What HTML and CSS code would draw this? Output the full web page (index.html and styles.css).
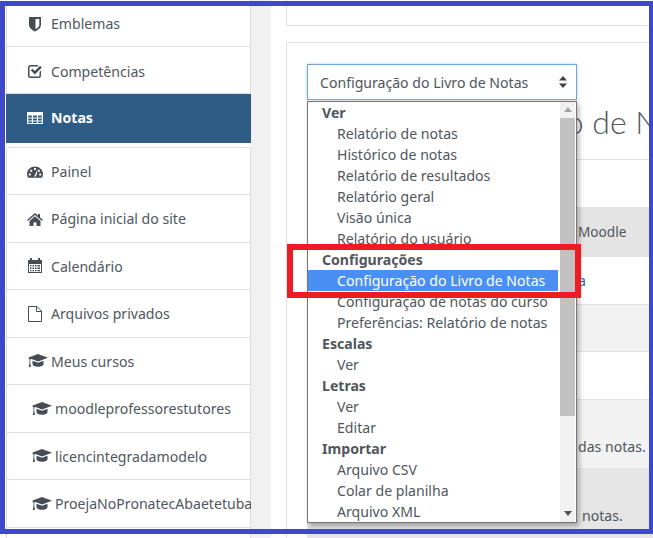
FILE: index.html
```html
<!DOCTYPE html>
<html lang="pt-BR">
<head>
<meta charset="utf-8">
<title>Notas</title>
<link rel="stylesheet" href="styles.css">
</head>
<body>
<div class="page">
  <nav class="sidebar">
    <div class="group first">
      <a class="item"><svg class="ico" viewBox="0 0 16 16"><path fill-rule="evenodd" d="M2 1h12v8c0 3-3 5-6 6.500C5 14 2 12 2 9zM8.500 3v10.200C10.500 12 12.300 10.800 12.300 9V3z"/></svg><span>Emblemas</span></a>
      <a class="item"><svg class="ico" viewBox="0 0 16 16"><path d="M3.500 2H11v1.500H3.500q-1 0-1 1v8q0 1 1 1h8q1 0 1-1V9l1.500-1.500v5q0 2.500-2.500 2.500h-8Q1 15 1 12.500v-8Q1 2 3.500 2z"/><path d="M3.800 7.300l1.600-1.600 2.400 2.400 5.300-5.300 1.700 1.600-7 7z"/></svg><span>Competências</span></a>
    </div>
    <a class="item active"><svg class="ico" viewBox="0 0 16 16"><path fill-rule="evenodd" d="M0 2h16v12H0zM1.200 5.500v2h3.700v-2zM6 5.500v2h4v-2zM11.100 5.500v2h3.700v-2zM1.200 8.500v2h3.700v-2zM6 8.500v2h4v-2zM11.100 8.500v2h3.700v-2zM1.200 11.500v1.500h3.700v-1.500zM6 11.500v1.500h4v-1.500zM11.100 11.500v1.500h3.700v-1.500z"/></svg><span>Notas</span></a>
    <div class="group second">
      <a class="item"><svg class="ico" viewBox="0 0 16 16"><path fill-rule="evenodd" d="M8 2.500c4.400 0 8 3.300 8 7.500 0 1.500-.4 2.700-1.100 3.700H1.100C.4 12.700 0 11.500 0 10c0-4.200 3.600-7.500 8-7.500zM7 4v2h2V4zM3.200 5.700v2h2v-2zM10.800 5.700v2h2v-2zM1.800 9.500v2h2v-2zM12.200 9.500v2h2v-2zM7.200 12.500h1.900l1.300-5-.8-.2z"/></svg><span>Painel</span></a>
      <a class="item"><svg class="ico" viewBox="0 0 16 16"><path d="M8 2l3 2.600V3h2v3.300L16 9l-.9 1L8 4 .9 10 0 9z"/><path d="M8 5.300l5.500 4.600V15H9.500v-3.500h-3V15h-4V9.900z"/></svg><span>Página inicial do site</span></a>
      <a class="item"><svg class="ico" viewBox="0 0 16 16"><path fill-rule="evenodd" d="M3 0h2v2h6V0h2v2h2v13H1V2h2zM2 6v8h12V6zM3 7h1.500v1.500H3zM5.500 7H7v1.500H5.500zM8 7h1.500v1.500H8zM10.500 7H13v1.500h-2.500zM3 9.500h1.500V11H3zM5.500 9.500H7V11H5.500zM8 9.500h1.500V11H8zM10.500 9.500H13V11h-2.500zM3 12h1.500v1.300H3zM5.500 12H7v1.300H5.500zM8 12h1.500v1.300H8zM10.500 12H13v1.300h-2.500z"/></svg><span>Calendário</span></a>
      <a class="item"><svg class="ico" viewBox="0 0 16 16"><path fill="none" stroke="currentColor" d="M1.500.5h8.500l4.500 4.500v10.500h-13zM9.500.5v5h5"/></svg><span>Arquivos privados</span></a>
      <a class="item cap"><svg class="ico" viewBox="0 0 20 16"><use href="#cap"/></svg><span>Meus cursos</span></a>
      <a class="item cap sub"><svg class="ico" viewBox="0 0 20 16"><use href="#cap"/></svg><span>moodleprofessorestutores</span></a>
      <a class="item cap sub"><svg class="ico" viewBox="0 0 20 16"><use href="#cap"/></svg><span>licencintegradamodelo</span></a>
      <a class="item cap sub"><svg class="ico" viewBox="0 0 20 16"><use href="#cap"/></svg><span>ProejaNoPronatecAbaetetuba</span></a>
      <a class="item"></a>
    </div>
  </nav>
  <div class="gutter"></div>
  <main class="content">
    <div class="card top-card"></div>
    <section class="card main-card">
      <div class="select-wrap">
        <div class="select">
          <span>Configuração do Livro de Notas</span>
          <svg class="updown" viewBox="0 0 8 12"><path d="M4 0l4 4.500H0zM4 12L0 7.500h8z"/></svg>
        </div>
        <div class="listbox">
          <div class="options">
            <div class="opt head">Ver</div>
            <div class="opt">Relatório de notas</div>
            <div class="opt">Histórico de notas</div>
            <div class="opt">Relatório de resultados</div>
            <div class="opt">Relatório geral</div>
            <div class="opt">Visão única</div>
            <div class="opt">Relatório do usuário</div>
            <div class="opt head">Configurações</div>
            <div class="opt selected">Configuração do Livro de Notas</div>
            <div class="opt">Configuração de notas do curso</div>
            <div class="opt">Preferências: Relatório de notas</div>
            <div class="opt head">Escalas</div>
            <div class="opt">Ver</div>
            <div class="opt head">Letras</div>
            <div class="opt">Ver</div>
            <div class="opt">Editar</div>
            <div class="opt head">Importar</div>
            <div class="opt">Arquivo CSV</div>
            <div class="opt">Colar de planilha</div>
            <div class="opt">Arquivo XML</div>
          </div>
          <div class="scrollbar">
            <svg class="arrow" viewBox="0 0 8 5"><path d="M4 0l4 5H0z"/></svg>
            <div class="thumb"></div>
            <svg class="arrow down" viewBox="0 0 8 5"><path d="M0 0h8L4 5z"/></svg>
          </div>
        </div>
      </div>
      <h2 class="title">Configuração de Notas</h2>
      <div class="rows">
        <div class="row header">Moodle</div>
        <div class="row link">a</div>
        <div class="row odd"></div>
        <div class="row"></div>
        <div class="row odd tall">das notas.</div>
        <div class="row dark">notas.</div>
      </div>
    </section>
  </main>
</div>
<svg class="defs" width="0" height="0"><symbol id="cap" viewBox="0 0 20 16"><path d="M10 1l10 3.800-10 3.700L3.500 6.100 2.300 6.600v3.300l.7 4H.8l.7-4V6.300L0 4.800z"/><path d="M4.500 7.700L10 9.800l5.500-2.100V11c0 1.700-2.500 2.800-5.500 2.800S4.500 12.700 4.500 11z"/></symbol></svg>
<div class="frame"></div>
<div class="callout"></div>
</body>
</html>
```
FILE: styles.css
```css
* { box-sizing: border-box; }
html, body { margin: 0; height: 538px; overflow: hidden; background: #fff; }
body {
  position: relative;
  font-family: "Noto Sans", "Open Sans", sans-serif;
  font-size: 14.1px;
  color: #4f565d;
}
.page { display: flex; height: 538px; width: 653px; overflow: hidden; padding-left: 6px; }
.defs { position: absolute; }

.sidebar { width: 245px; flex: none; }
.group { width: 245px; border: 1px solid #dedede; border-width: 0 1px; background: #fff; }
.group.second { border-top: 1px solid #dedede; margin-top: 4px; }
.item {
  display: flex;
  align-items: center;
  gap: 8px;
  height: 47.5px;
  padding-left: 20px;
  padding-top: 1px;
  border-bottom: 1px solid #dedede;
  white-space: nowrap;
  overflow: visible;
}
.group.first .item { height: 47px; }
.group.first .item + .item { padding-top: 2px; }
.group.second .item:first-child { height: 47px; }
.group.second .item:last-child { border-bottom: 0; }
.ico { width: 16px; height: 16px; flex: none; fill: #474d54; color: #474d54; }
.item.cap { gap: 3px; padding-left: 21px; }
.item.cap .ico { width: 20px; }
.item.sub { padding-left: 25px; }
.item.active {
  height: 49px;
  width: 245px;
  padding-left: 21px;
  padding-top: 0;
  padding-bottom: 2px;
  border: 0;
  background: #2f5c85;
  color: #fff;
  font-weight: 700;
}
.item.active .ico { fill: #fff; }

.gutter { width: 20px; flex: none; background: #f1f1f1; }
.content { flex: none; width: 382px; padding-left: 15px; }
.card { border: 1px solid #e2e2e2; border-right: 0; background: #fff; }
.top-card { height: 26px; border-top: 0; }
.main-card { margin-top: 16px; padding: 21px 0 0 20px; height: 520px; }

.select-wrap { position: relative; width: 270px; height: 36px; }
.select {
  display: flex;
  align-items: center;
  justify-content: space-between;
  height: 36px;
  padding: 0 9px 0 12px;
  border: 1px solid #72a6d8;
  box-shadow: 0 0 3px rgba(114, 166, 216, .5);
  white-space: nowrap;
  background: #fff;
}
.updown { width: 8px; height: 12px; fill: #3c4248; }
.listbox {
  position: absolute;
  z-index: 2;
  top: 37px;
  left: 0;
  width: 270px;
  height: 422px;
  display: flex;
  border: 1px solid #767676;
  background: #fff;
  box-shadow: 2px 3px 5px rgba(0, 0, 0, .3);
  overflow: hidden;
}
.options { flex: 1; min-width: 0; }
.opt { height: 21px; line-height: 22px; padding-left: 29px; white-space: nowrap; }
.opt.head { padding-left: 14px; font-weight: 700; }
.opt.selected { background: #4a8ff2; color: #fff; margin-right: 2px; }
.scrollbar {
  width: 15px;
  flex: none;
  margin-right: 1px;
  background: #f1f1f1;
  position: relative;
  display: flex;
  flex-direction: column;
  align-items: center;
}
.arrow { width: 8px; height: 5px; margin-top: 5px; fill: #a3a3a3; flex: none; }
.arrow.down { position: absolute; bottom: 6px; margin: 0; fill: #505050; }
.thumb { width: 100%; height: 298px; margin-top: 6px; background: #c1c1c1; }

.title {
  margin: 0;
  height: 60px;
  padding-left: 94px;
  font-family: Lato, sans-serif;
  font-weight: 300;
  font-size: 32px;
  line-height: 44px;
  white-space: nowrap;
  color: #4f565d;
  border-bottom: 1px solid #dee2e6;
}
.rows { margin-top: 47px; }
.row { height: 47.500px; padding-left: 271px; border-top: 1px solid #e3e3e3; white-space: nowrap; line-height: 47px; }
.row.header { height: 49px; background: #e4e4e4; line-height: 50px; border: 0; font-size: 13.6px; }
.row.link { color: #2a6aa0; }
.row.odd { background: #f2f2f2; }
.row.tall { height: 69px; padding-top: 23px; }
.row.dark { height: 80px; background: #e5e5e5; border: 0; padding-top: 24px; padding-left: 275px; }

.frame {
  position: absolute;
  left: 0;
  top: 1px;
  width: 653px;
  height: 533px;
  border: solid #3f48cc;
  border-width: 5px 4px 5px 5px;
  pointer-events: none;
  z-index: 5;
}
.callout {
  position: absolute;
  left: 287px;
  top: 244px;
  width: 294px;
  height: 54px;
  border: 6px solid #ed1c24;
  z-index: 4;
  pointer-events: none;
}
```
